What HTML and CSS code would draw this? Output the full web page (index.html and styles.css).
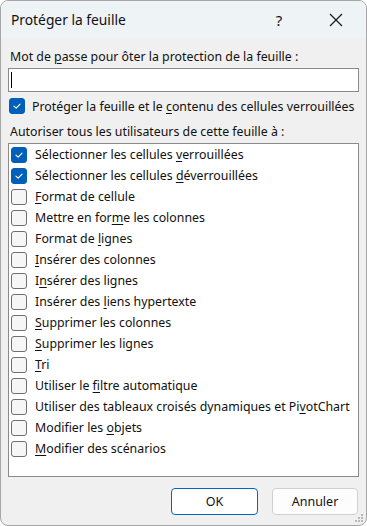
FILE: index.html
```html
<!DOCTYPE html>
<html lang="fr">
<head>
<meta charset="utf-8">
<title>Protéger la feuille</title>
<link rel="stylesheet" href="styles.css">
</head>
<body>
<div class="dialog">
  <div class="titlebar">
    <span class="title">Protéger la feuille</span>
    <span class="help">?</span>
    <span class="close">
      <svg width="14" height="14" viewBox="0 0 14 14"><path d="M1 1 L13 13 M13 1 L1 13" stroke="#1a1a1a" stroke-width="1.2" fill="none"/></svg>
    </span>
  </div>
  <div class="content">
    <div class="label">Mot de <u>p</u>asse pour ôter la protection de la feuille :</div>
    <div class="input"><span class="caret"></span></div>
    <div class="row protect">
      <span class="cb checked"><svg viewBox="0 0 16 16"><path d="M4.5 8.2 L7 10.5 L11.5 5.8" stroke="#fff" stroke-width="1.3" fill="none" stroke-linecap="round" stroke-linejoin="round"/></svg></span>
      <span>Protéger la feuille et le <u>c</u>ontenu des cellules verrouillées</span>
    </div>
    <div class="label allow">Autoriser tous les utilisateurs de cette feuille à :</div>
    <div class="list">
      <div class="item"><span class="cb checked"><svg viewBox="0 0 16 16"><path d="M4.5 8.2 L7 10.5 L11.5 5.8" stroke="#fff" stroke-width="1.3" fill="none" stroke-linecap="round" stroke-linejoin="round"/></svg></span><span>Sélectionner les cellules <u>v</u>errouillées</span></div>
      <div class="item"><span class="cb checked"><svg viewBox="0 0 16 16"><path d="M4.5 8.2 L7 10.5 L11.5 5.8" stroke="#fff" stroke-width="1.3" fill="none" stroke-linecap="round" stroke-linejoin="round"/></svg></span><span>Sélectionner les cellules <u>d</u>éverrouillées</span></div>
      <div class="item"><span class="cb"></span><span><u>F</u>ormat de cellule</span></div>
      <div class="item"><span class="cb"></span><span>Mettre en for<u>m</u>e les colonnes</span></div>
      <div class="item"><span class="cb"></span><span>Format de <u>l</u>ignes</span></div>
      <div class="item"><span class="cb"></span><span><u>I</u>nsérer des colonnes</span></div>
      <div class="item"><span class="cb"></span><span>I<u>n</u>sérer des lignes</span></div>
      <div class="item"><span class="cb"></span><span>Insérer des <u>l</u>iens hypertexte</span></div>
      <div class="item"><span class="cb"></span><span><u>S</u>upprimer les colonnes</span></div>
      <div class="item"><span class="cb"></span><span><u>S</u>upprimer les lignes</span></div>
      <div class="item"><span class="cb"></span><span><u>T</u>ri</span></div>
      <div class="item"><span class="cb"></span><span>Utiliser le <u>f</u>iltre automatique</span></div>
      <div class="item"><span class="cb"></span><span>Utiliser des tableaux croisés dynamiques et Pi<u>v</u>otChart</span></div>
      <div class="item"><span class="cb"></span><span>Modifier les <u>o</u>bjets</span></div>
      <div class="item"><span class="cb"></span><span><u>M</u>odifier des scénarios</span></div>
    </div>
    <div class="buttons">
      <button class="btn default">OK</button>
      <button class="btn">Annuler</button>
    </div>
  </div>
  <svg class="grip" width="10" height="10" viewBox="0 0 10 10">
    <rect x="7" y="1" width="2" height="2" fill="#b8b8b8"/>
    <rect x="4" y="4" width="2" height="2" fill="#b8b8b8"/>
    <rect x="7" y="4" width="2" height="2" fill="#b8b8b8"/>
    <rect x="1" y="7" width="2" height="2" fill="#b8b8b8"/>
    <rect x="4" y="7" width="2" height="2" fill="#b8b8b8"/>
    <rect x="7" y="7" width="2" height="2" fill="#b8b8b8"/>
  </svg>
</div>
</body>
</html>
```
FILE: styles.css
```css
* { box-sizing: border-box; }
html, body { margin: 0; padding: 0; background: #ffffff; }
body {
  font-family: "Noto Sans", "Open Sans", sans-serif;
  font-size: 12.35px;
  color: #111111;
}
u { text-decoration: underline; text-underline-offset: 2px; text-decoration-thickness: 1px; }
.dialog {
  position: relative;
  width: 367px;
  height: 526px;
  border: 1px solid #a6a6a6;
  border-radius: 8px;
  background: #f0f0f0;
  overflow: hidden;
  display: flex;
  flex-direction: column;
}
.titlebar {
  height: 37px;
  background: #eef3f6;
  display: flex;
  align-items: center;
  padding-left: 10px;
}
.title { font-size: 13.8px; flex: 1; color: #111; }
.help { font-size: 15px; width: 20px; margin-right: 40px; text-align: center; }
.close { width: 14px; height: 14px; margin-right: 23px; display: flex; }
.content {
  flex: 1;
  padding: 0 7px 0 7px;
  display: flex;
  flex-direction: column;
}
.label { line-height: 16px; margin-top: 11px; padding-left: 2px; }
.input {
  margin-top: 3px;
  height: 24px;
  background: #fff;
  border: 1px solid #8a8a8a;
  display: flex;
  align-items: center;
  padding-left: 2px;
}
.caret { width: 1px; height: 16px; background: #000; }
.row { display: flex; align-items: center; gap: 7px; height: 16px; margin-top: 6px; padding-left: 1px; }
.label.allow { margin-top: 10px; }
.cb {
  width: 16px; height: 16px;
  border: 1px solid #6f6f6f;
  border-radius: 3px;
  background: #f6f6f6;
  flex-shrink: 0;
  display: flex;
}
.cb svg { width: 14px; height: 14px; }
.cb.checked { background: #005fb8; border-color: #005fb8; }
.list {
  margin-top: 3px;
  height: 334px;
  background: #fff;
  border: 1px solid #8a8a8a;
  padding-top: 0;
  padding-left: 2px;
}
.item { display: flex; align-items: center; gap: 8px; height: 21px; }
.buttons {
  display: flex;
  justify-content: flex-end;
  gap: 14px;
  margin-top: 11px;
  padding-right: 1px;
}
.btn {
  font-family: inherit;
  font-size: 12.5px;
  color: #111;
  width: 86px;
  height: 27px;
  background: #fdfdfd;
  border: 1px solid #d0d0d0;
  border-radius: 4px;
}
.btn.default { border: 1.5px solid #0067c0; background: #fff; width: 87px; }
.grip { position: absolute; right: 2px; bottom: 2px; }
```
